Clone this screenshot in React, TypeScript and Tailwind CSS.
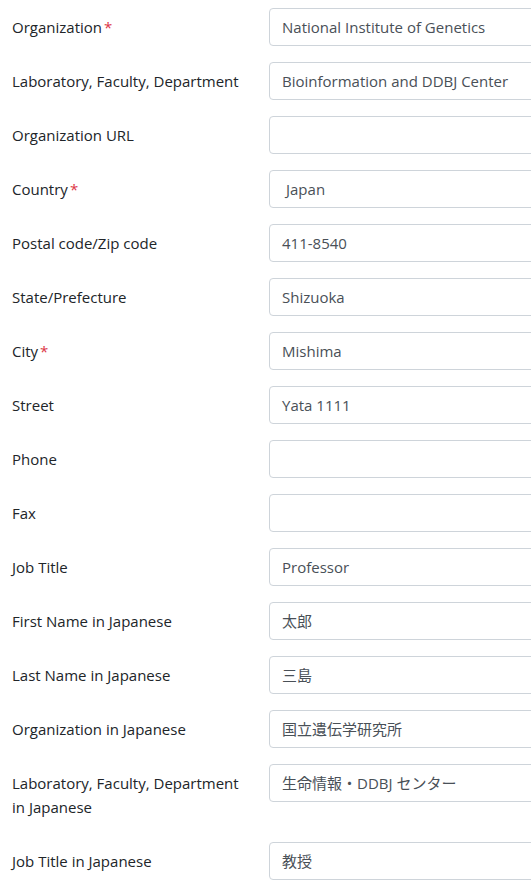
const rows: { label: string; value: string; required?: boolean; select?: boolean }[] = [
  { label: "Organization", value: "National Institute of Genetics", required: true },
  { label: "Laboratory, Faculty, Department", value: "Bioinformation and DDBJ Center" },
  { label: "Organization URL", value: "" },
  { label: "Country", value: "Japan", required: true, select: true },
  { label: "Postal code/Zip code", value: "411-8540" },
  { label: "State/Prefecture", value: "Shizuoka" },
  { label: "City", value: "Mishima", required: true },
  { label: "Street", value: "Yata 1111" },
  { label: "Phone", value: "" },
  { label: "Fax", value: "" },
  { label: "Job Title", value: "Professor" },
  { label: "First Name in Japanese", value: "太郎" },
  { label: "Last Name in Japanese", value: "三島" },
  { label: "Organization in Japanese", value: "国立遺伝学研究所" },
  { label: "Laboratory, Faculty, Department in Japanese", value: "生命情報・DDBJ センター" },
  { label: "Job Title in Japanese", value: "教授" },
];

export default function App() {
  return (
    <div
      className="w-[531px] h-[886px] overflow-hidden bg-white pt-2 text-[15px] leading-6 text-[#212529]"
      style={{ fontFamily: '"Open Sans", "Noto Sans CJK JP", sans-serif' }}
    >
      {rows.map((r) => (
        <div key={r.label} className="flex mb-4">
          <label className="w-[269px] shrink-0 pl-3 pr-7 py-[7px]">
            {r.label}
            {r.required && <span className="text-[#dc3545] ml-0.5">*</span>}
          </label>
          <div className="shrink-0 w-[400px] h-[38px] border border-[#ced4da] rounded-[4px] px-3 py-[6px] text-[#495057] whitespace-nowrap">
            <span className={r.select ? "pl-1" : ""}>{r.value}</span>
          </div>
        </div>
      ))}
    </div>
  );
}
